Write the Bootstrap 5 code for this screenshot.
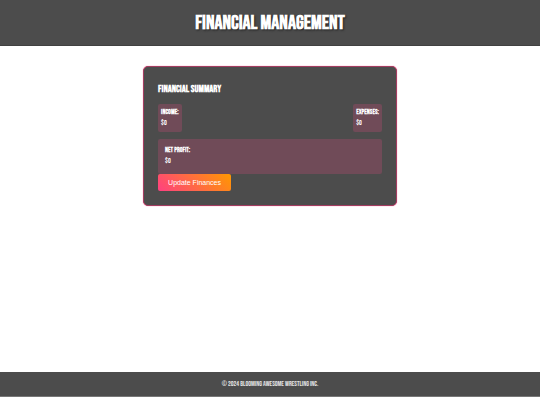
<!DOCTYPE html>
<html lang="en">
<head>
<meta charset="utf-8">
<meta name="viewport" content="width=device-width, initial-scale=1">
<title>Financial Management</title>
<link href="https://cdn.jsdelivr.net/npm/bootstrap@5.3.0/dist/css/bootstrap.min.css" rel="stylesheet">
<style>
body { background: #fff; color: #fff; font-family: "Bebas Neue", "Liberation Sans Narrow", "Liberation Sans", sans-serif; }
.bar { background: #4c4c4c; }
.site-head { padding: 11px 10px 9px; border-bottom: 1px solid #414141; }
.site-head h1 { font-size: 20px; line-height: 25px; font-weight: 700; text-shadow: 1px 1px 2px #222; }
.summary { width: 47%; min-width: 253px; background: #4c4c4c; border: 1px solid #a33d60; border-radius: 5px; padding: 14px; box-shadow: 0 0 1px #ff4081; }
.summary h2 { font-size: 10px; line-height: 16px; font-weight: 700; margin-bottom: 7px; }
.stat { background: #704b58; border-radius: 2px; font-size: 7px; line-height: 11px; }
.stat-row { margin-bottom: 7px; }
.stat-sm { padding: 3px; }
.stat-lg { padding: 6px 7px 7px; }
.update { border: 0; border-radius: 2px; padding: 0 10px; color: #fff; background: linear-gradient(45deg, #ff4081, #ff9800); font-family: "Liberation Sans", Arial, sans-serif; font-size: 7px; line-height: 17px; }
.site-foot { padding: 6px; border-bottom: 1px solid #777; color: #e4e4e4; font-size: 7px; line-height: 12px; }
</style>
<script src="https://cdn.jsdelivr.net/npm/bootstrap@5.3.0/dist/js/bootstrap.bundle.min.js" defer></script>
</head>
<body class="d-flex flex-column min-vh-100 pb-2">
<header class="bar site-head text-center"><h1 class="m-0">FINANCIAL MANAGEMENT</h1></header>
<main class="flex-grow-1 d-flex justify-content-center align-items-start py-3">
  <section class="summary mt-1">
    <h2>FINANCIAL SUMMARY</h2>
    <div class="stat-row d-flex justify-content-between">
      <div class="stat stat-sm"><strong>INCOME:</strong><div>$0</div></div>
      <div class="stat stat-sm"><strong>EXPENSES:</strong><div>$0</div></div>
    </div>
    <div class="stat stat-lg"><strong>NET PROFIT:</strong><div>$0</div></div>
    <button type="button" class="update d-block">Update Finances</button>
  </section>
</main>
<footer class="bar site-foot text-center">© 2024 BLOOMING AWESOME WRESTLING INC.</footer>
</body>
</html>
